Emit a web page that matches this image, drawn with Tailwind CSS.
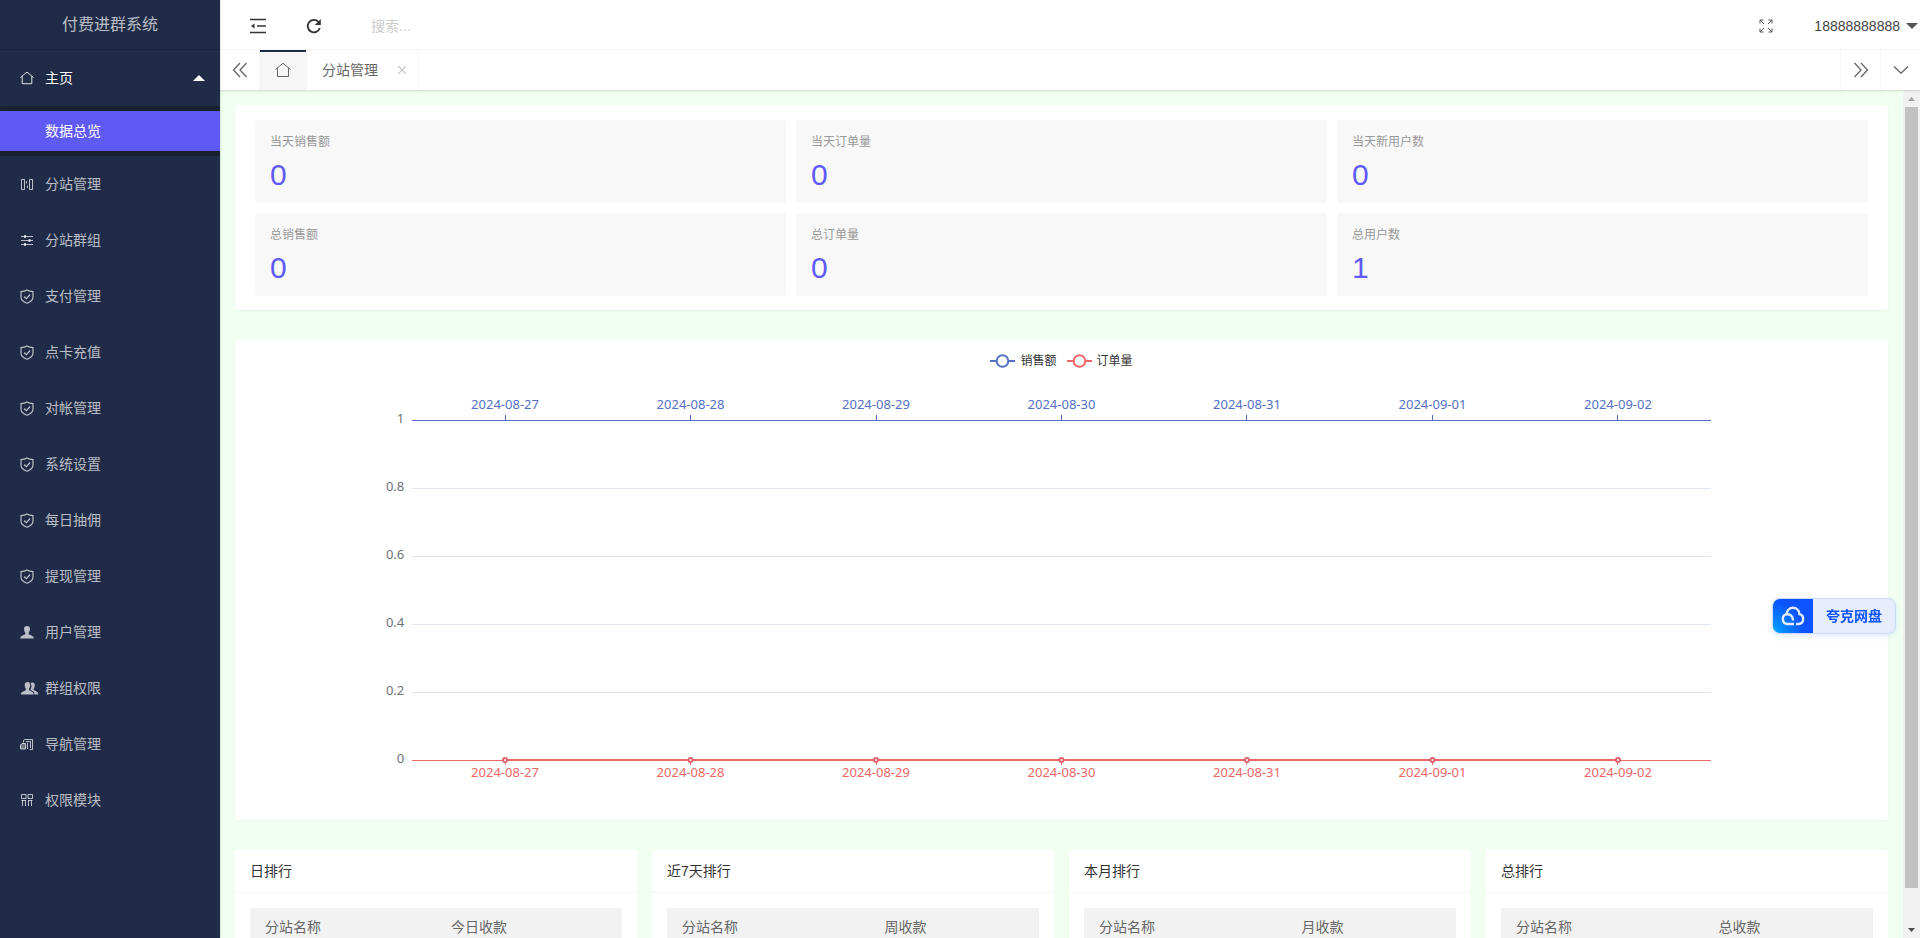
<!DOCTYPE html>
<html lang="zh-CN">
<head>
<meta charset="utf-8">
<meta name="viewport" content="width=device-width, initial-scale=1">
<title>付费进群系统</title>
<script src="https://cdn.jsdelivr.net/npm/@tailwindcss/browser@4"></script>
</head>
<body class="flex h-screen overflow-hidden bg-[#f0fff0] font-['Liberation_Sans','Noto_Sans_CJK_SC',sans-serif] text-sm text-[#333]">

<svg class="hidden" aria-hidden="true">
  <symbol id="house" viewBox="0 0 16 16"><path d="M.5 7.500 8 1.200 15.500 7.500M2.500 6V14.500H13.500V6" fill="none" stroke="currentColor"/></symbol>
  <symbol id="shield" viewBox="0 0 14 15"><path d="M7 1C5.500 2 3.500 2.500 1 2.600V8c0 3 2.500 5 6 6.300C10.500 13 13 11 13 8V2.600C10.500 2.500 8.500 2 7 1ZM4 7.500 6.300 9.700 10.200 5.500" fill="none" stroke="currentColor" stroke-width="1.200"/></symbol>
</svg>

<aside class="relative z-20 flex w-55 shrink-0 flex-col bg-[#202b47] text-white/70 shadow-[1px_0_2px_rgba(0,0,0,0.1)]">
  <div class="flex h-[50px] shrink-0 items-center justify-center border-b border-black/15 text-base">付费进群系统</div>
  <nav class="flex flex-col">
    <a href="#" class="flex h-14 items-center pl-5 pr-[15px] text-white">
      <svg class="mr-[11px] size-3.5"><use href="#house"/></svg>主页
      <svg class="ml-auto h-1.5 w-3" viewBox="0 0 12 6"><path d="M0 6 6 0l6 6z" fill="currentColor"/></svg>
    </a>
    <div class="rounded-xs bg-[#192131] py-[5px]">
      <a href="#" class="flex h-10 items-center bg-[#5f5af6] pl-[45px] text-white">数据总览</a>
    </div>
    <a href="#" class="flex h-14 items-center pl-5"><svg class="mr-[11px] size-3.5" viewBox="0 0 14 14" fill="none" stroke="currentColor"><path d="M1.500 2.500H4.500V12.500H1.500ZM9.500 2.500H12.500V12.500H9.500Z"/><path d="M6.500 4V6.500M7.500 8.500V11"/></svg>分站管理</a>
    <a href="#" class="flex h-14 items-center pl-5"><svg class="mr-[11px] size-3.5" viewBox="0 0 14 14" fill="none" stroke="currentColor"><path d="M1 3.500H13M1 7.500H13M1 11.500H13"/><path d="M5 2v3M9.500 6v3M5 10v3" stroke-width="2"/></svg>分站群组</a>
    <a href="#" class="flex h-14 items-center pl-5"><svg class="mr-[11px] h-[15px] w-3.5"><use href="#shield"/></svg>支付管理</a>
    <a href="#" class="flex h-14 items-center pl-5"><svg class="mr-[11px] h-[15px] w-3.5"><use href="#shield"/></svg>点卡充值</a>
    <a href="#" class="flex h-14 items-center pl-5"><svg class="mr-[11px] h-[15px] w-3.5"><use href="#shield"/></svg>对帐管理</a>
    <a href="#" class="flex h-14 items-center pl-5"><svg class="mr-[11px] h-[15px] w-3.5"><use href="#shield"/></svg>系统设置</a>
    <a href="#" class="flex h-14 items-center pl-5"><svg class="mr-[11px] h-[15px] w-3.5"><use href="#shield"/></svg>每日抽佣</a>
    <a href="#" class="flex h-14 items-center pl-5"><svg class="mr-[11px] h-[15px] w-3.5"><use href="#shield"/></svg>提现管理</a>
    <a href="#" class="flex h-14 items-center pl-5"><svg class="mr-[11px] size-3.5" viewBox="0 0 14 14" fill="currentColor"><path d="M7 1c2 0 3 1.300 3 3 0 1.600-.6 2.800-1.300 3.500v1.700c1.300.8 4.300 1.400 4.800 2.800.2.500.2 1 .2 1.500H.3c0-.5 0-1 .2-1.500.5-1.400 3.500-2 4.800-2.800V7.500C4.600 6.800 4 5.600 4 4c0-1.700 1-3 3-3Z"/></svg>用户管理</a>
    <a href="#" class="flex h-14 items-center pl-5"><svg class="mr-[6px] h-3.5 w-[19px]" viewBox="0 0 19 14" fill="currentColor"><path d="M7.500 1c1.800 0 2.700 1.300 2.700 3 0 1.600-.5 2.800-1.200 3.500v1.700c1.200.8 4 1.400 4.400 2.800.2.500.2 1 .2 1.500H1c0-.5 0-1 .2-1.500.5-1.400 3.400-2 4.600-2.800V7.500C5.200 6.800 4.700 5.600 4.700 4c0-1.700 1-3 2.800-3Z"/><path d="M10.600 2.200c.4-.5 1-.7 1.700-.7 1.700 0 2.500 1.200 2.500 2.800 0 1.500-.5 2.600-1.100 3.200v1.600c1.100.8 3.800 1.500 4.300 2.900.2.500.2 1 .2 1.500h-3.700c0-2.500-1.500-3.300-3.900-4.400V8c1-1.500 1.300-4 0-5.800Z"/></svg>群组权限</a>
    <a href="#" class="flex h-14 items-center pl-5"><svg class="mr-[11px] size-3.5" viewBox="0 0 14 14" fill="none" stroke="currentColor"><path d="M3.500 5.500V3.500L5 2.500H12.500V12.500H9.500M6 4.500H10.500V11M7.500 12V5.500"/><path d="M.5 12V8L2 6.500H5.500V12Z" fill="currentColor" fill-opacity=".5"/></svg>导航管理</a>
    <a href="#" class="flex h-14 items-center pl-5"><svg class="mr-[11px] size-3.5" viewBox="0 0 14 14" fill="none" stroke="currentColor"><path d="M1.500 1.500H6V5.500H1.500ZM8 1.500H12.500V5.500H8ZM2.500 7.500V13M5.500 7.500V13M8.500 7.500V13M11.500 7.500V13M1.500 7.500H6M8 7.500H12.500"/></svg>权限模块</a>
  </nav>
</aside>

<div class="flex min-w-0 flex-1 flex-col">
  <header class="flex h-[50px] shrink-0 items-center border-b border-[#f6f6f6] bg-white pl-[10px] pr-0.5 pt-0.5">
    <button aria-label="收起菜单" class="flex h-full w-14 items-center justify-center"><svg class="size-4" viewBox="0 0 16 16"><path d="M0 1.500H16M7 8H16M0 14.500H16" stroke="#333" stroke-width="1.500"/><path d="M4.500 5.500V10.500L1 8Z" fill="#333"/></svg></button>
    <button aria-label="刷新" class="flex h-full w-14 items-center justify-center"><svg class="size-4" viewBox="0 0 16 16"><path d="M13.800 10A6.200 6.200 0 1 1 12.300 3.700" fill="none" stroke="#333" stroke-width="1.800"/><path d="M14.800 1V7H8.800Z" fill="#333"/></svg></button>
    <input type="text" aria-label="搜索" placeholder="搜索..." class="ml-[29px] h-8 w-40 bg-transparent outline-none placeholder:text-[#ccc]">
    <button aria-label="全屏" class="ml-auto mr-[41px] flex h-full items-center"><svg class="size-3.5" viewBox="0 0 14 14" fill="none" stroke="#555"><path d="M1 4.500V1H4.500M9.500 1H13V4.500M13 9.500V13H9.500M4.500 13H1V9.500M1 1 5 5M13 1 9 5M13 13 9 9M1 13 5 9"/></svg></button>
    <button class="flex h-full items-center gap-1.5 text-[#444]">18888888888<svg class="h-1.5 w-3" viewBox="0 0 12 6"><path d="M0 0H12L6 6Z" fill="#555"/></svg></button>
  </header>

  <div class="relative z-10 flex h-10 shrink-0 bg-white text-[#666] shadow-[0_1px_2px_rgba(0,0,0,0.15)]">
    <button aria-label="向左滚动" class="flex w-10 items-center justify-center border-r border-[#f6f6f6]"><svg class="size-4" viewBox="0 0 16 16" fill="none" stroke="currentColor" stroke-width="1.300"><path d="M8 1 1.500 8 8 15M14.500 1 8 8l6.500 7"/></svg></button>
    <button aria-label="首页" class="flex w-[47px] items-center justify-center border-r border-[#f6f6f6] bg-[#f6f6f6] shadow-[inset_0_2px_0_#202b47]"><svg class="size-4"><use href="#house"/></svg></button>
    <div class="flex items-center gap-5 border-r border-[#f6f6f6] pl-[15px] pr-3">
      <a href="#">分站管理</a>
      <button aria-label="关闭分站管理" class="text-[#c2c2c2]"><svg class="size-2" viewBox="0 0 8 8"><path d="M0 0 8 8M8 0 0 8" stroke="currentColor" stroke-width="1.200"/></svg></button>
    </div>
    <button aria-label="向右滚动" class="ml-auto flex w-10 items-center justify-center border-l border-[#f6f6f6]"><svg class="size-4" viewBox="0 0 16 16" fill="none" stroke="currentColor" stroke-width="1.300"><path d="M1.500 1 8 8l-6.500 7M8 1l6.500 7L8 15"/></svg></button>
    <button aria-label="页签操作" class="flex w-10 items-center justify-center border-l border-[#f6f6f6]"><svg class="h-2 w-4" viewBox="0 0 16 8" fill="none" stroke="currentColor" stroke-width="1.300"><path d="M1 .5 8 7.200 15 .5"/></svg></button>
  </div>

  <div class="flex min-h-0 flex-1">
    <main class="flex min-w-0 flex-1 flex-col gap-[30px] overflow-hidden p-[15px]">
      <section class="grid shrink-0 grid-cols-3 gap-[10px] rounded-xs bg-white px-5 pt-[15px] pb-3.5 shadow-[0_1px_2px_rgba(0,0,0,0.05)]">
        <div class="h-[83px] rounded-xs bg-[#f8f8f8] px-[15px] py-[10px]"><h3 class="text-xs leading-6 text-[#999]">当天销售额</h3><p class="mt-1 text-[30px] leading-[34px] text-[#5f5af6]">0</p></div>
        <div class="h-[83px] rounded-xs bg-[#f8f8f8] px-[15px] py-[10px]"><h3 class="text-xs leading-6 text-[#999]">当天订单量</h3><p class="mt-1 text-[30px] leading-[34px] text-[#5f5af6]">0</p></div>
        <div class="h-[83px] rounded-xs bg-[#f8f8f8] px-[15px] py-[10px]"><h3 class="text-xs leading-6 text-[#999]">当天新用户数</h3><p class="mt-1 text-[30px] leading-[34px] text-[#5f5af6]">0</p></div>
        <div class="h-[83px] rounded-xs bg-[#f8f8f8] px-[15px] py-[10px]"><h3 class="text-xs leading-6 text-[#999]">总销售额</h3><p class="mt-1 text-[30px] leading-[34px] text-[#5f5af6]">0</p></div>
        <div class="h-[83px] rounded-xs bg-[#f8f8f8] px-[15px] py-[10px]"><h3 class="text-xs leading-6 text-[#999]">总订单量</h3><p class="mt-1 text-[30px] leading-[34px] text-[#5f5af6]">0</p></div>
        <div class="h-[83px] rounded-xs bg-[#f8f8f8] px-[15px] py-[10px]"><h3 class="text-xs leading-6 text-[#999]">总用户数</h3><p class="mt-1 text-[30px] leading-[34px] text-[#5f5af6]">1</p></div>
      </section>

      <section class="relative shrink-0 rounded-xs bg-white px-[15px] shadow-[0_1px_2px_rgba(0,0,0,0.05)]">
        <div class="absolute inset-x-0 top-3 flex justify-center gap-[10px] text-xs leading-[18px]">
          <span class="flex items-center gap-[5px]"><svg class="h-3.5 w-[25px]" viewBox="0 0 25 14" stroke="#5470c6" stroke-width="2"><path d="M0 7H25"/><circle cx="12.500" cy="7" r="5.800" fill="#fff"/></svg>销售额</span>
          <span class="flex items-center gap-[5px]"><svg class="h-3.5 w-[25px]" viewBox="0 0 25 14" stroke="#ee6666" stroke-width="2"><path d="M0 7H25"/><circle cx="12.500" cy="7" r="5.800" fill="#fff"/></svg>订单量</span>
        </div>
        <svg class="h-[480px] w-full font-['Noto_Sans',sans-serif] text-[13px]" role="img" aria-label="近七天销售额与订单量">
          <g stroke="#e0e6f1" shape-rendering="crispEdges">
            <line x1="10%" x2="90%" y1="148.500" y2="148.500"/><line x1="10%" x2="90%" y1="216.500" y2="216.500"/><line x1="10%" x2="90%" y1="284.500" y2="284.500"/><line x1="10%" x2="90%" y1="352.500" y2="352.500"/>
          </g>
          <g stroke="#5470c6" shape-rendering="crispEdges">
            <line x1="10%" x2="90%" y1="80.500" y2="80.500"/>
            <line x1="15.714%" x2="15.714%" y1="75" y2="80"/><line x1="27.143%" x2="27.143%" y1="75" y2="80"/><line x1="38.571%" x2="38.571%" y1="75" y2="80"/><line x1="50%" x2="50%" y1="75" y2="80"/><line x1="61.429%" x2="61.429%" y1="75" y2="80"/><line x1="72.857%" x2="72.857%" y1="75" y2="80"/><line x1="84.286%" x2="84.286%" y1="75" y2="80"/>
          </g>
          <g stroke="#ee6666" shape-rendering="crispEdges">
            <line x1="10%" x2="90%" y1="420.500" y2="420.500"/>
            <line x1="15.714%" x2="84.286%" y1="420" y2="420" stroke-width="2"/>
            <line x1="15.714%" x2="15.714%" y1="420" y2="425"/><line x1="27.143%" x2="27.143%" y1="420" y2="425"/><line x1="38.571%" x2="38.571%" y1="420" y2="425"/><line x1="50%" x2="50%" y1="420" y2="425"/><line x1="61.429%" x2="61.429%" y1="420" y2="425"/><line x1="72.857%" x2="72.857%" y1="420" y2="425"/><line x1="84.286%" x2="84.286%" y1="420" y2="425"/>
          </g>
          <g stroke="#e0626c" stroke-width="2" fill="#fff">
            <circle cx="15.714%" cy="420" r="2"/><circle cx="27.143%" cy="420" r="2"/><circle cx="38.571%" cy="420" r="2"/><circle cx="50%" cy="420" r="2"/><circle cx="61.429%" cy="420" r="2"/><circle cx="72.857%" cy="420" r="2"/><circle cx="84.286%" cy="420" r="2"/>
          </g>
          <g fill="#5470c6" text-anchor="middle">
            <text x="15.714%" y="69">2024-08-27</text><text x="27.143%" y="69">2024-08-28</text><text x="38.571%" y="69">2024-08-29</text><text x="50%" y="69">2024-08-30</text><text x="61.429%" y="69">2024-08-31</text><text x="72.857%" y="69">2024-09-01</text><text x="84.286%" y="69">2024-09-02</text>
          </g>
          <g fill="#ee6666" text-anchor="middle">
            <text x="15.714%" y="437">2024-08-27</text><text x="27.143%" y="437">2024-08-28</text><text x="38.571%" y="437">2024-08-29</text><text x="50%" y="437">2024-08-30</text><text x="61.429%" y="437">2024-08-31</text><text x="72.857%" y="437">2024-09-01</text><text x="84.286%" y="437">2024-09-02</text>
          </g>
          <g fill="#6e7079" text-anchor="end" transform="translate(-8 0)">
            <text x="10%" y="83">1</text><text x="10%" y="151">0.8</text><text x="10%" y="219">0.6</text><text x="10%" y="287">0.4</text><text x="10%" y="355">0.2</text><text x="10%" y="423">0</text>
          </g>
        </svg>
      </section>

      <div class="grid shrink-0 grid-cols-4 gap-[15px]">
        <section class="rounded-xs bg-white">
          <h2 class="h-[43px] border-b border-[#f6f6f6] px-[15px] leading-[42px]">日排行</h2>
          <div class="p-[15px]"><table class="w-full bg-[#f2f2f2] text-left text-[#666]"><thead><tr class="h-[38px]"><th class="px-[15px] font-normal">分站名称</th><th class="px-[15px] font-normal">今日收款</th></tr></thead></table></div>
        </section>
        <section class="rounded-xs bg-white">
          <h2 class="h-[43px] border-b border-[#f6f6f6] px-[15px] leading-[42px]">近7天排行</h2>
          <div class="p-[15px]"><table class="w-full bg-[#f2f2f2] text-left text-[#666]"><thead><tr class="h-[38px]"><th class="px-[15px] font-normal">分站名称</th><th class="px-[15px] font-normal">周收款</th></tr></thead></table></div>
        </section>
        <section class="rounded-xs bg-white">
          <h2 class="h-[43px] border-b border-[#f6f6f6] px-[15px] leading-[42px]">本月排行</h2>
          <div class="p-[15px]"><table class="w-full bg-[#f2f2f2] text-left text-[#666]"><thead><tr class="h-[38px]"><th class="px-[15px] font-normal">分站名称</th><th class="px-[15px] font-normal">月收款</th></tr></thead></table></div>
        </section>
        <section class="rounded-xs bg-white">
          <h2 class="h-[43px] border-b border-[#f6f6f6] px-[15px] leading-[42px]">总排行</h2>
          <div class="p-[15px]"><table class="w-full bg-[#f2f2f2] text-left text-[#666]"><thead><tr class="h-[38px]"><th class="px-[15px] font-normal">分站名称</th><th class="px-[15px] font-normal">总收款</th></tr></thead></table></div>
        </section>
      </div>
    </main>

    <div class="flex w-[17px] shrink-0 flex-col bg-[#f1f1f1]" aria-hidden="true">
      <div class="flex h-[17px] items-center justify-center"><svg class="h-1 w-[7px]" viewBox="0 0 7 4"><path d="M0 4 3.500 0 7 4Z" fill="#a3a3a3"/></svg></div>
      <div class="min-h-0 flex-1 px-0.5"><div class="h-[96%] bg-[#c1c1c1]"></div></div>
      <div class="flex h-[17px] items-center justify-center"><svg class="h-1 w-[7px]" viewBox="0 0 7 4"><path d="M0 0H7L3.500 4Z" fill="#505050"/></svg></div>
    </div>
  </div>
</div>

<button class="fixed right-6 bottom-[304px] z-30 flex h-9 w-[124px] overflow-hidden rounded-lg border border-[#c9dafc] bg-[#e6edff] font-bold text-[#0d53ff] shadow-[0_2px_6px_rgba(13,83,255,0.12)]">
  <span class="flex h-full w-10 items-center justify-center bg-[radial-gradient(circle_at_bottom_left,#00a6ff,#0d53ff_60%)]">
    <svg class="h-5 w-6" viewBox="0 0 24 20" fill="none" stroke="#e6edff" stroke-width="2.400"><path d="M13 18H6.500A5 5 0 0 1 5.500 8.200C6 4.500 8.500 1.800 12 1.800s6.200 2.500 6.500 6.400A5 5 0 0 1 17.500 18H15M4.500 8.500C9 7.500 12 10 12 14.500"/></svg>
  </span>
  <span class="flex h-full flex-1 items-center justify-center">夸克网盘</span>
</button>
</body>
</html>
